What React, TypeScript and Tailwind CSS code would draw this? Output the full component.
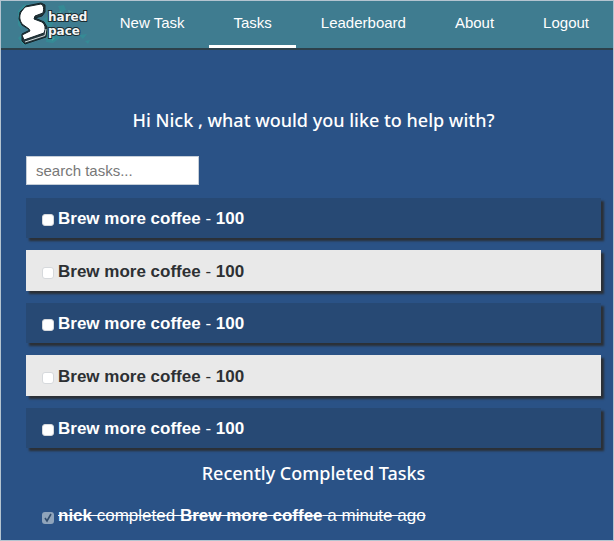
import React from "react";

const links = ["New Task", "Tasks", "Leaderboard", "About", "Logout"];
const tasks = [1, 2, 3, 4, 5];

function Logo() {
  return (
    <svg viewBox="0 0 76 46" className="h-[46px] w-[76px]" role="img" aria-label="Shared Space">
      <g fill="#2b9c9c" opacity="0.45">
        <path d="M2 10l5-6 6-1-4 10 2 9-6 2 2 6-5-6zM27 18l7-4 4 6-3 7 4 6-8 2 2-8z" />
        <path d="M7 32l-5 5 5 7 6-1zM31 35l8-2 6 3-8 6-7-1zM42 5l6-1 2 5-5 3z" />
        <path d="M63 34l8-1-4 5zM69 40l5-1-2 4z" />
      </g>
      <g fill="#52b5a2" opacity="0.5">
        <path d="M40 12l5-2 1 6-5 2zM52 9l5 2-3 4zM35 36l4 1-3 3z" />
      </g>
      <path
        d="M10 5L25 2L29 4L29 11L26 15L19 17L28 21L31 26L30 36L9 43L6 40L6 33L14 29L6 24L3 18L4 11Z"
        fill="#26383d"
        stroke="#14252a"
        strokeWidth="1"
        strokeLinejoin="round"
      />
      <path
        d="M9 6L25 3Q29 5 27 12L19 15L18 18L26 21Q31 25 28 32L8 39L6 34L14 30L13 28L6 23Q2 17 5 11Z"
        fill="#fff"
        stroke="#14252a"
        strokeWidth="1"
        strokeLinejoin="round"
      />
      <path d="M9 41L29 34.5L30 28" fill="none" stroke="#d7dfe0" strokeWidth="1" />
      <g
        fill="#f4f6f6"
        stroke="#1b2d32"
        strokeWidth="2"
        paintOrder="stroke"
        fontFamily="DejaVu Sans, sans-serif"
        fontWeight="700"
        fontSize="12"
      >
        <text x="32" y="20">hared</text>
        <text x="32" y="34">pace</text>
      </g>
    </svg>
  );
}

export default function App() {
  return (
    <div className="border border-[#b4c4d0] bg-[#2a5286] font-['Liberation_Sans',Arial,sans-serif] text-white">
      <header className="flex h-[49px] items-stretch justify-between border-b-2 border-[#2c404b] bg-[#3f7c90] pl-[15px]">
        <a href="#home"><Logo /></a>
        <nav className="flex gap-px text-[15px]">
          {links.map((name) => (
            <a
              key={name}
              href="#nav"
              className={`border-b-3 px-6 pt-[10px] leading-6 ${name === "Tasks" ? "border-white" : "border-transparent"}`}
            >
              {name}
            </a>
          ))}
        </nav>
      </header>
      <main className="pt-14 pr-3 pb-3 pl-[25px]">
        <h1 className="text-center font-['Noto_Sans','Open_Sans',sans-serif] text-lg font-medium">
          Hi Nick , what would you like to help with?
        </h1>
        <input
          type="text"
          aria-label="search tasks"
          placeholder="search tasks..."
          className="mt-[22px] block h-[29px] w-[173px] border border-[#c5ced8] bg-white px-[9px] text-[15px] text-[#333] placeholder:text-[#777]"
        />
        <ul className="mt-[13px] flex flex-col gap-3 text-[17px] leading-6">
          {tasks.map((n) => (
            <li
              key={n}
              className="h-10 bg-[#274974] shadow-[3px_3px_2px_#2b3036] even:h-[41px] even:bg-[#e9e9e9] even:text-[#2d3033]"
            >
              <label className="flex h-full items-center px-4 pt-0.5">
                <input type="checkbox" className="mt-0.5 mr-1 size-3 appearance-none rounded-[3px] border border-[#d6d9dc] bg-white" />
                <span><b>Brew more coffee</b> - <b>100</b></span>
              </label>
            </li>
          ))}
        </ul>
        <h2 className="mt-[11px] text-center font-['Noto_Sans','Open_Sans',sans-serif] text-lg font-medium">
          Recently Completed Tasks
        </h2>
        <label className="mt-[17px] flex items-center px-4 text-[17px] leading-6">
          <span className="relative mt-1 mr-1 flex size-3">
            <input type="checkbox" defaultChecked disabled className="size-3 appearance-none rounded-[3px] bg-[#8fa4bb]" />
            <svg viewBox="0 0 12 12" className="absolute inset-0 size-3" fill="none" stroke="#304c6c" strokeWidth="1.6">
              <path d="M3 6l2 3 4-7" />
            </svg>
          </span>
          <span className="line-through"><b>nick</b> completed <b>Brew more coffee</b> a minute ago</span>
        </label>
      </main>
    </div>
  );
}
